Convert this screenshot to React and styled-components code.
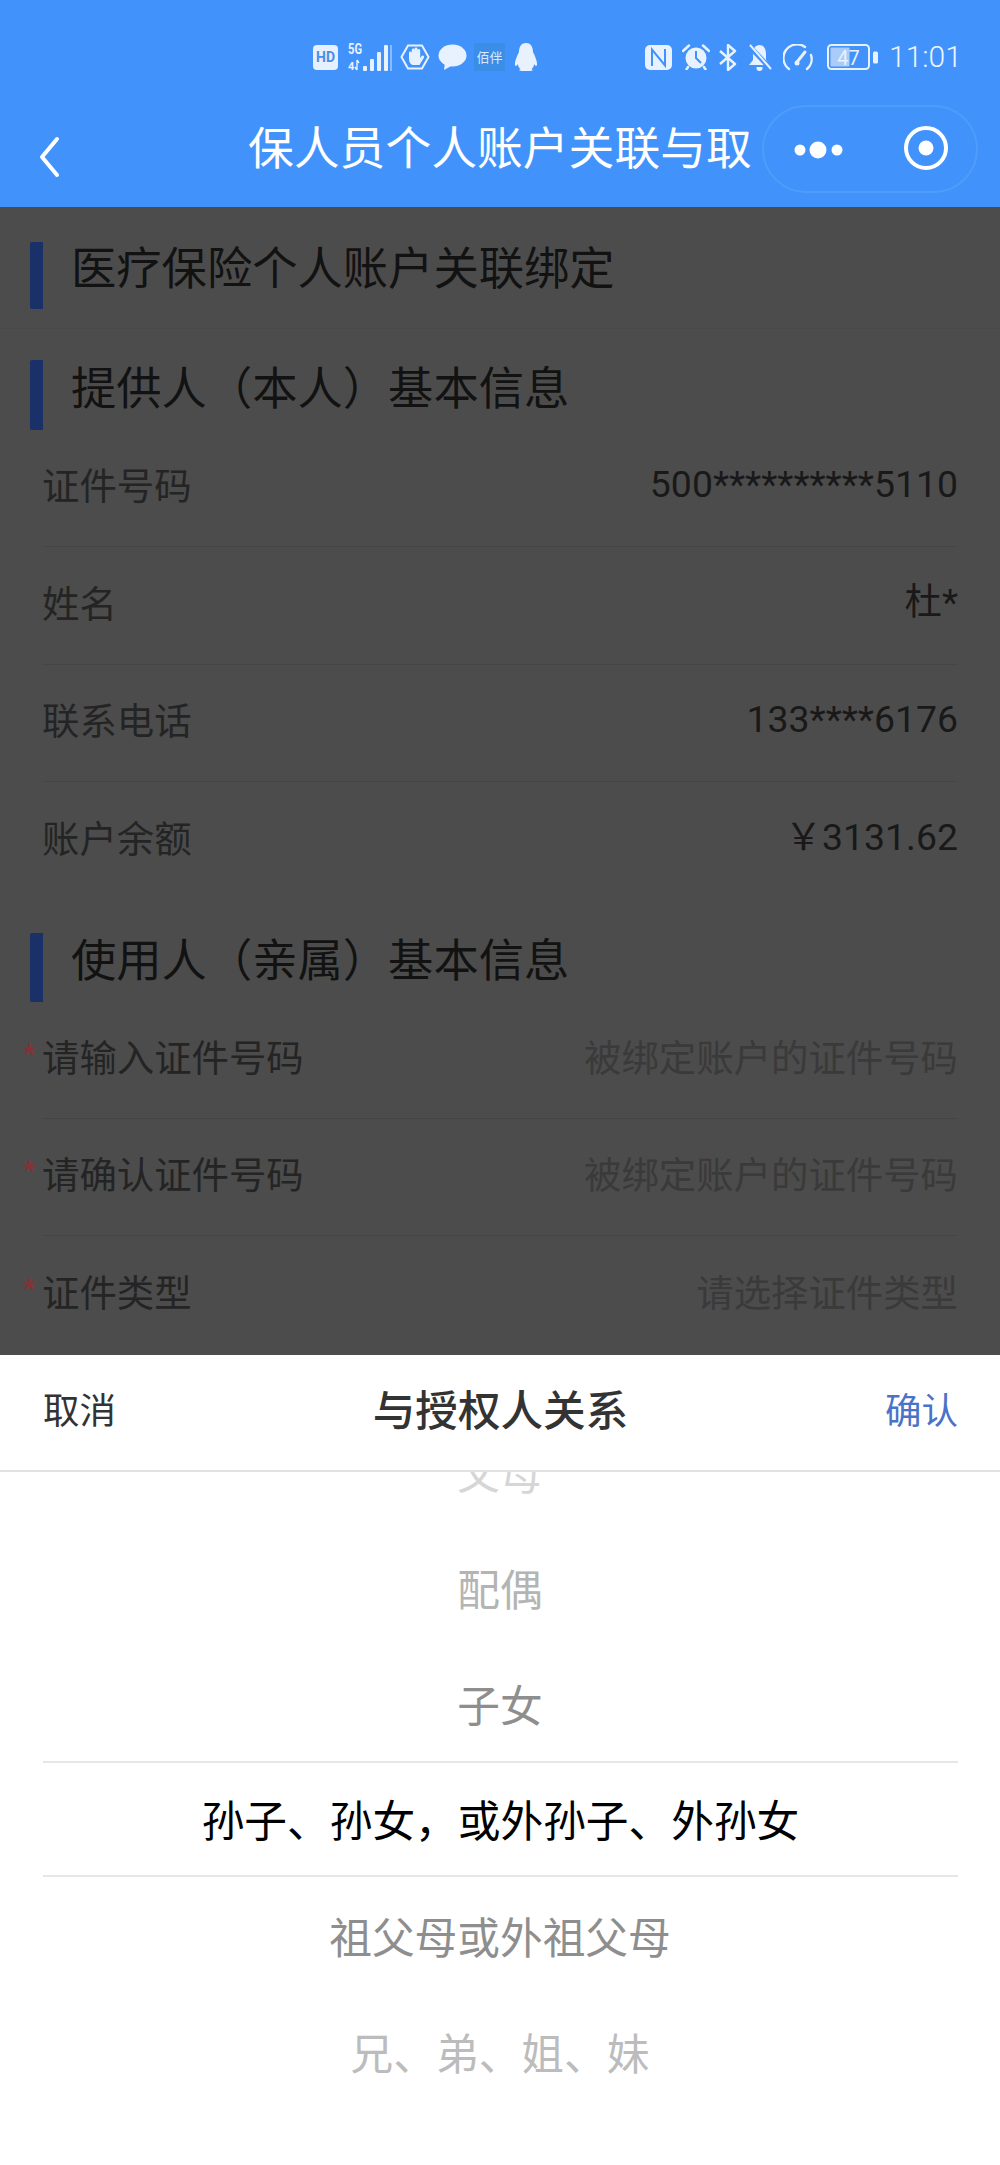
import React from 'react'
import styled, { createGlobalStyle } from 'styled-components'

const GlobalStyle = createGlobalStyle`
  html, body {
    margin: 0;
    padding: 0;
    background: #fff;
  }
  * {
    box-sizing: border-box;
  }
`

const Page = styled.div`
  width: 1000px;
  height: 2165px;
  display: flex;
  flex-direction: column;
  overflow: hidden;
  font-family: "Noto Sans CJK SC", "Noto Sans", sans-serif;
`

const TopBlue = styled.header`
  background: #4193fb;
  color: #fff;
  flex: none;
`

const StatusBar = styled.div`
  height: 90px;
  padding: 24px 42px 0 313px;
  display: flex;
  justify-content: space-between;
  align-items: center;
`

const StatusGroup = styled.div`
  display: flex;
  align-items: center;
`

const StatusIcon = styled.svg`
  flex: none;
  display: block;
  margin-left: ${(p) => p.$gap || 0}px;
`

const HdTile = styled.div`
  width: 25px;
  height: 25px;
  background: #e6f0fe;
  border-radius: 4px;
  color: #4a8fe6;
  font-family: "Roboto", sans-serif;
  font-size: 14px;
  font-weight: 700;
  line-height: 25px;
  text-align: center;
`

const AppTile = styled.div`
  width: 31px;
  height: 28px;
  margin-left: 7px;
  background: #3c8de6;
  color: #d8e9ff;
  font-size: 13px;
  line-height: 28px;
  text-align: center;
  white-space: nowrap;
`

const Time = styled.div`
  margin-left: 11px;
  width: 69px;
  font-family: "Roboto", sans-serif;
  font-size: 30px;
  font-weight: 300;
  line-height: 32px;
  color: #eef5ff;
  white-space: nowrap;
`

const NavBar = styled.div`
  height: 117px;
  padding-left: 38px;
  display: flex;
  align-items: center;
`

const BackSvg = styled.svg`
  flex: none;
  margin-top: 17px;
`

const NavTitle = styled.div`
  width: 506px;
  margin: 0 8px 8px 188px;
  overflow: hidden;
  white-space: nowrap;
  font-size: 45.8px;
  line-height: 68px;
`

const Capsule = styled.div`
  width: 216px;
  height: 88px;
  margin-top: 1px;
  border: 2px solid #4f9cfb;
  border-radius: 44px;
  display: flex;
  align-items: center;
  flex: none;
`

const Content = styled.main`
  height: 1148px;
  flex: none;
  overflow: hidden;
  background: #4c4c4c;
`

const FirstSection = styled.div`
  padding: 35px 0 19px;
  border-bottom: 1px solid #484848;
`

const Heading = styled.h2`
  margin: ${(p) => p.$top || 0}px 0 0 30px;
  height: ${(p) => p.$height}px;
  padding: 0 0 21px 28px;
  border-left: 13px solid #1a3068;
  border-radius: 2px;
  display: flex;
  align-items: center;
  font-size: 45.3px;
  font-weight: 400;
  line-height: 56px;
  color: #121212;
  white-space: nowrap;
`

const Row = styled.div`
  height: 117.4px;
  margin: 0 42px;
  padding-bottom: 8px;
  display: flex;
  justify-content: space-between;
  align-items: center;
  font-size: 37.4px;
  line-height: 48px;
  border-bottom: ${(p) => (p.$last ? 'none' : '1px solid #454545')};
`

const Label = styled.div`
  display: flex;
  color: #242424;
`

const RequiredMark = styled.span`
  width: 21px;
  margin-left: -21px;
  color: #853236;
  font-size: 36px;
`

const Value = styled.div`
  font-family: "Roboto", "Noto Sans CJK SC", sans-serif;
  color: #191919;
`

const Placeholder = styled.div`
  color: #3a3a3a;
`

const Sheet = styled.section`
  flex: 1;
  min-height: 0;
  display: flex;
  flex-direction: column;
  background: #fff;
`

const SheetHeader = styled.div`
  height: 117px;
  flex: none;
  padding: 0 42px 8px 43px;
  display: flex;
  justify-content: space-between;
  align-items: center;
  border-bottom: 2px solid #e2e2e2;
  position: relative;
  z-index: 1;
  background: #fff;
`

const SheetAction = styled.div`
  width: 73px;
  font-size: 36.5px;
  line-height: 48px;
  white-space: nowrap;
  color: ${(p) => p.$color};
`

const SheetTitle = styled.div`
  margin-bottom: 2px;
  font-size: 42.6px;
  font-weight: 500;
  line-height: 56px;
  color: #333;
`

const Picker = styled.div`
  flex: 1;
  min-height: 0;
  overflow: hidden;
`

const PickerList = styled.div`
  margin-top: -59px;
`

const PickerItem = styled.div`
  height: 116px;
  display: flex;
  justify-content: center;
  align-items: center;
  font-size: 42.7px;
  line-height: 56px;
  color: ${(p) => p.$color};
`

const PickerSelected = styled(PickerItem)`
  margin: 0 42px 0 43px;
  padding-bottom: 2px;
  border-top: 2px solid #e6e6e6;
  border-bottom: 2px solid #e6e6e6;
  color: #000;
`

const BackIcon = () => (
  <BackSvg width="22" height="42" viewBox="0 0 22 42" fill="none">
    <path d="M19 3 L4 21 L19 39" stroke="#fff" strokeWidth="4" strokeLinecap="round" strokeLinejoin="round" />
  </BackSvg>
)

const MoreIcon = () => (
  <StatusIcon $gap={29} width="60" height="24" viewBox="0 0 60 24" fill="#fff">
    <circle cx="7" cy="13" r="5.5" />
    <circle cx="25" cy="13" r="8.5" />
    <circle cx="44" cy="13" r="5.5" />
  </StatusIcon>
)

const CloseIcon = () => (
  <StatusIcon $gap={50} width="46" height="46" viewBox="0 0 46 46" fill="none">
    <circle cx="23" cy="22" r="20" stroke="#fff" strokeWidth="4" />
    <circle cx="23" cy="22" r="7.5" fill="#fff" />
  </StatusIcon>
)

const ICON = '#e8f1fe'

const SignalIcon = () => (
  <StatusIcon $gap={10} width="44" height="30" viewBox="0 0 44 30">
    <text x="0" y="12" fontFamily="Roboto, sans-serif" fontSize="14" fontWeight="700" textLength="14" lengthAdjust="spacingAndGlyphs" fill={ICON}>5G</text>
    <text x="0" y="28" fontFamily="Roboto, sans-serif" fontSize="11" fontWeight="700" fill={ICON}>4</text>
    <path d="M9 18 v10 M9 28 l-2 -3 M9 18 l2 3" stroke={ICON} strokeWidth="1.4" fill="none" />
    <rect x="15" y="24" width="4" height="5" rx="1" fill={ICON} />
    <rect x="22" y="17" width="4" height="12" rx="1" fill={ICON} />
    <rect x="29" y="10" width="4" height="19" rx="1" fill={ICON} />
    <rect x="36" y="3" width="4" height="26" rx="1" fill={ICON} />
    <rect x="42" y="3" width="2" height="26" fill="#8cbcf8" />
  </StatusIcon>
)

const HandIcon = () => (
  <StatusIcon $gap={8} width="30" height="26" viewBox="0 0 30 26">
    <path d="M8 1.5 H22 L28.5 13 L22 24.5 H8 L1.5 13 Z" fill="none" stroke={ICON} strokeWidth="2" />
    <path d="M9 9 a1.4 1.4 0 0 1 2.800 0 V6 a1.4 1.400 0 0 1 2.800 0 V5 a1.400 1.400 0 0 1 2.800 0 V6.500 a1.400 1.400 0 0 1 2.800 0 V14 l1.500 -2 a1.400 1.400 0 0 1 2.200 1.700 L19.500 21 H12.500 C10 20 9 17 9 15 Z" fill={ICON} />
  </StatusIcon>
)

const BubbleIcon = () => (
  <StatusIcon $gap={8} width="29" height="26" viewBox="0 0 29 26" fill={ICON}>
    <ellipse cx="14.5" cy="11.5" rx="14" ry="11" />
    <path d="M7 18 L6 26 L15 21 Z" />
  </StatusIcon>
)

const PenguinIcon = () => (
  <StatusIcon $gap={9} width="24" height="28" viewBox="0 0 23 28" fill={ICON}>
    <path d="M11.5 0 C17 0 18.5 5 18.5 9 C20 12 23 18 22.5 22 C22 24 20 22 19.5 21 C19.5 24 18 25 17 26 C19 27 18 28 15 28 H8 C5 28 4 27 6 26 C5 25 3.500 24 3.500 21 C3 22 1 24 .5 22 C0 18 3 12 4.500 9 C4.500 5 6 0 11.500 0 Z" />
  </StatusIcon>
)

const NfcIcon = () => (
  <StatusIcon width="27" height="25" viewBox="0 0 27 25">
    <rect width="27" height="25" rx="5" fill={ICON} />
    <path d="M7 21 V4.500 L20 20.500 V4" fill="none" stroke="#4193fb" strokeWidth="2" />
  </StatusIcon>
)

const AlarmIcon = () => (
  <StatusIcon $gap={10} width="28" height="26" viewBox="0 0 28 26">
    <circle cx="14" cy="14" r="10.500" fill={ICON} />
    <path d="M14 7 V14 L19 19" fill="none" stroke="#4193fb" strokeWidth="2" />
    <path d="M1 7 L7 1.500 M27 7 L21 1.500 M6 23 L4.500 25.500 M22 23 L23.500 25.500" stroke={ICON} strokeWidth="2.500" strokeLinecap="round" />
  </StatusIcon>
)

const BluetoothIcon = () => (
  <StatusIcon $gap={8} width="20" height="27" viewBox="0 0 20 27" fill="none">
    <path d="M2 7 L17 20 L10 26 V1 L17 7 L2 20" stroke={ICON} strokeWidth="2.400" strokeLinejoin="round" />
  </StatusIcon>
)

const BellOffIcon = () => (
  <StatusIcon $gap={9} width="25" height="27" viewBox="0 0 25 27">
    <path d="M12.500 1 C17 1 19 5 19 10 V16 L23 21 H2 L6 16 V10 C6 5 8 1 12.500 1 Z" fill={ICON} />
    <path d="M9.500 23 H15.500 V24 A3 3 0 0 1 9.500 24 Z" fill={ICON} />
    <path d="M2 2 L23 24" stroke="#4193fb" strokeWidth="5" />
    <path d="M3 1 L24 25" stroke={ICON} strokeWidth="2" />
  </StatusIcon>
)

const GaugeIcon = () => (
  <StatusIcon $gap={11} width="30" height="27" viewBox="0 0 30 27" fill="none">
    <path d="M6 25 A13 13 0 0 1 22 3" stroke={ICON} strokeWidth="2.400" strokeLinecap="round" />
    <path d="M28 11 A13 13 0 0 1 24 25" stroke={ICON} strokeWidth="2.400" strokeLinecap="round" />
    <path d="M22 8 L14 18" stroke={ICON} strokeWidth="3" strokeLinecap="round" />
    <circle cx="14" cy="19" r="2.500" fill={ICON} />
  </StatusIcon>
)

const BatteryIcon = () => (
  <StatusIcon $gap={14} width="51" height="26" viewBox="0 0 51 26">
    <rect x="1" y="1" width="41" height="24" rx="3.500" fill="none" stroke={ICON} strokeWidth="2" />
    <rect x="3.500" y="3.500" width="19" height="19" rx="1" fill="#a9ccfa" />
    <text x="21.500" y="20.500" textAnchor="middle" fontFamily="Roboto, sans-serif" fontSize="20" fill={ICON}>47</text>
    <rect x="46" y="7.500" width="5" height="12" rx="1.500" fill={ICON} />
  </StatusIcon>
)

const providerRows = [
  ['证件号码', '500**********5110'],
  ['姓名', '杜*'],
  ['联系电话', '133****6176'],
  ['账户余额', '￥3131.62'],
]

const userRows = [
  ['请输入证件号码', '被绑定账户的证件号码'],
  ['请确认证件号码', '被绑定账户的证件号码'],
  ['证件类型', '请选择证件类型'],
]

const App = () => {
  return (
    <Page>
      <GlobalStyle />
      <TopBlue>
        <StatusBar>
          <StatusGroup>
            <HdTile>HD</HdTile>
            <SignalIcon />
            <HandIcon />
            <BubbleIcon />
            <AppTile>佰伴</AppTile>
            <PenguinIcon />
          </StatusGroup>
          <StatusGroup>
            <NfcIcon />
            <AlarmIcon />
            <BluetoothIcon />
            <BellOffIcon />
            <GaugeIcon />
            <BatteryIcon />
            <Time>11:01</Time>
          </StatusGroup>
        </StatusBar>
        <NavBar>
          <BackIcon />
          <NavTitle>保人员个人账户关联与取</NavTitle>
          <Capsule>
            <MoreIcon />
            <CloseIcon />
          </Capsule>
        </NavBar>
      </TopBlue>

      <Content>
        <FirstSection>
          <Heading $height={67}>医疗保险个人账户关联绑定</Heading>
        </FirstSection>
        <Heading $top={31} $height={70}>提供人（本人）基本信息</Heading>
        {providerRows.map(([label, value], i) => (
          <Row key={label} $last={i === providerRows.length - 1}>
            <Label>{label}</Label>
            <Value>{value}</Value>
          </Row>
        ))}
        <Heading $top={33} $height={69}>使用人（亲属）基本信息</Heading>
        {userRows.map(([label, hint], i) => (
          <Row key={label} $last={i === userRows.length - 1}>
            <Label>
              <RequiredMark>*</RequiredMark>
              {label}
            </Label>
            <Placeholder>{hint}</Placeholder>
          </Row>
        ))}
      </Content>

      <Sheet>
        <SheetHeader>
          <SheetAction $color="#333">取消</SheetAction>
          <SheetTitle>与授权人关系</SheetTitle>
          <SheetAction $color="#4a73c8">确认</SheetAction>
        </SheetHeader>
        <Picker>
          <PickerList>
            <PickerItem $color="#d6d6d6">父母</PickerItem>
            <PickerItem $color="#b4b4b4">配偶</PickerItem>
            <PickerItem $color="#8e8e8e">子女</PickerItem>
            <PickerSelected>孙子、孙女，或外孙子、外孙女</PickerSelected>
            <PickerItem $color="#8e8e8e">祖父母或外祖父母</PickerItem>
            <PickerItem $color="#bcbcbc">兄、弟、姐、妹</PickerItem>
          </PickerList>
        </Picker>
      </Sheet>
    </Page>
  )
}

export default App
